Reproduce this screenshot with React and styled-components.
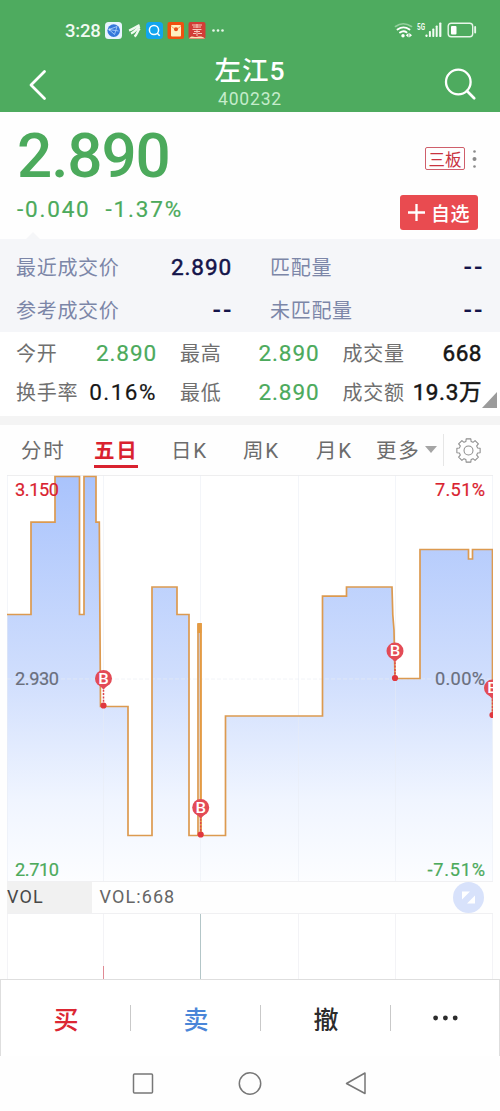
import React from "react";
import styled, { createGlobalStyle } from "styled-components";

const GREEN = "#4caa5c";
const RED = "#d9222f";

const Global = createGlobalStyle`
  * { box-sizing: border-box; }
  body {
    margin: 0;
    background: #fff;
    font-family: Roboto, "Noto Sans CJK SC", sans-serif;
  }
  svg { display: block; flex: none; }
`;

const Screen = styled.div`
  width: 500px;
  height: 1111px;
  background: #fefefe;
  display: flex;
  flex-direction: column;
  overflow: hidden;
`;

const Header = styled.header`
  height: 112px;
  flex: none;
  background: #4eab5f;
  color: #fff;
`;

const StatusBar = styled.div`
  height: 46px;
  padding: 16px 22px 0 65px;
  display: flex;
  align-items: center;
`;

const Clock = styled.span`
  font-size: 18.5px;
  font-weight: 500;
  line-height: 28px;
  letter-spacing: -0.2px;
  width: 40px;
  color: #f1faf2;
`;

const StatusIcons = styled.div`
  display: flex;
  align-items: center;
  margin-left: ${(p) => (p.$end ? "auto" : "0")};
`;

const TitleBar = styled.div`
  height: 66px;
  display: grid;
  grid-template-columns: 100px 1fr 100px;
`;

const BackButton = styled.div`
  padding: 23px 0 0 28px;
`;

const SearchButton = styled.div`
  padding: 22px 0 0 44px;
`;

const TitleStack = styled.div`
  display: flex;
  flex-direction: column;
  align-items: center;
`;

const Title = styled.div`
  margin-top: 7px;
  font-size: 26.5px;
  font-weight: 500;
  line-height: 36px;
  letter-spacing: 1px;
`;

const Code = styled.div`
  font-size: 17.5px;
  line-height: 20px;
  margin-top: 0;
  letter-spacing: 0.8px;
  color: #c5eccb;
`;

const Quote = styled.section`
  height: 127px;
  flex: none;
  display: flex;
  justify-content: space-between;
  padding: 0 22px 0 17px;
  position: relative;
`;

const Notch = styled.i`
  position: absolute;
  left: 26px;
  bottom: 0;
  border: 7px solid transparent;
  border-top: 0;
  border-bottom-color: #f5f6f8;
`;

const Price = styled.div`
  margin-top: 7px;
  font-size: 62px;
  font-weight: 500;
  line-height: 74px;
  color: ${GREEN};
  letter-spacing: -1.1px;
`;

const Changes = styled.div`
  display: flex;
  gap: 15px;
  margin-top: 3px;
  font-size: 22.5px;
  line-height: 26px;
  letter-spacing: 1.8px;
  color: ${GREEN};
  -webkit-text-stroke: 0.2px ${GREEN};
`;

const QuoteSide = styled.div`
  display: flex;
  flex-direction: column;
  align-items: flex-end;
`;

const BoardRow = styled.div`
  display: flex;
  align-items: center;
  gap: 7px;
  margin-top: 35px;
`;

const BoardTag = styled.span`
  width: 40px;
  height: 23px;
  border: 1px solid #cf5f6b;
  border-radius: 2px;
  color: #c9333f;
  font-size: 16.5px;
  line-height: 25px;
  text-align: center;
`;

const AddButton = styled.div`
  width: 78px;
  height: 35px;
  margin-top: 25px;
  border-radius: 3px;
  background: #e94b50;
  color: #fff;
  display: flex;
  align-items: center;
  gap: 6px;
  padding-left: 8px;
  font-size: 19px;
  font-weight: 500;
`;

const AddText = styled.span`
  line-height: 31px;
  padding-top: 3px;
  letter-spacing: 0.4px;
`;

const MatchPanel = styled.section`
  height: 93px;
  flex: none;
  background: #f5f6f9;
  padding: 6px 16px 0 16px;
  display: grid;
  grid-template-columns: 216px 213px;
  column-gap: 38px;
  grid-auto-rows: 43px;
`;

const StatPanel = styled.section`
  height: 84px;
  flex: none;
  background: #fff;
  padding: 1px 18px 0 16px;
  display: grid;
  grid-template-columns: 141px 139.5px 139.5px;
  column-gap: 23px;
  grid-auto-rows: 39px;
  position: relative;
`;

const Corner = styled.i`
  position: absolute;
  right: 3px;
  bottom: 8px;
  border-left: 15px solid transparent;
  border-bottom: 16px solid #9b9b9b;
`;

const Pair = styled.div`
  display: flex;
  justify-content: space-between;
  align-items: center;
  white-space: nowrap;
`;

const Label = styled.span`
  font-size: 20px;
  line-height: 30px;
  padding-top: 3px;
  letter-spacing: 0.7px;
  color: ${(p) => (p.$blue ? "#7c86a8" : "#6f6f6f")};
`;

const Value = styled.span`
  font-size: 22.5px;
  line-height: 30px;
  letter-spacing: ${(p) => p.$spacing ?? 0.9}px;
  font-weight: 400;
  color: ${(p) => p.$color};
  -webkit-text-stroke: ${(p) => (p.$bold ? 0.5 : 0.2)}px ${(p) => p.$color};
`;

const Dashes = styled.span`
  font-size: 25px;
  font-weight: 500;
  line-height: 26px;
  padding-top: 2px;
  letter-spacing: 2px;
  margin-right: -1.5px;
  color: #14144a;
`;

const Band = styled.div`
  height: 9px;
  flex: none;
  background: #f4f4f4;
`;

const Tabs = styled.nav`
  height: 50px;
  flex: none;
  display: grid;
  grid-template-columns: 73px 77px 72px 73px 60px 67px 1fr;
  padding-left: 21px;
`;

const Tab = styled.div`
  display: flex;
  height: 50px;
  font-size: 20.5px;
  letter-spacing: 1.8px;
  color: ${(p) => (p.$active ? RED : "#6c6c6c")};
  font-weight: ${(p) => (p.$active ? 700 : 400)};
  white-space: nowrap;
`;

const TabText = styled.span`
  height: 43px;
  line-height: 52px;
  width: ${(p) => (p.$active ? "44px" : "auto")};
  border-bottom: 3px solid ${(p) => (p.$active ? RED : "transparent")};
`;

const MoreArrow = styled.i`
  height: 0;
  border: 6px solid transparent;
  border-bottom: 0;
  border-top: 7px solid #a5a5a5;
  margin: 21px 0 0 4px;
`;

const SettingsCell = styled.div`
  height: 32px;
  margin: 9px 0 0 0;
  padding: 4px 0 0 12px;
  border-left: 1px solid #e6e6e6;
`;

const ChartArea = styled.div`
  height: 406px;
  flex: none;
`;

const VolumeHead = styled.div`
  height: 33px;
  flex: none;
  display: flex;
  margin-left: 7px;
  width: 486px;
  border-top: 1px solid #f0f0f2;
  border-bottom: 1px solid #f0f0f2;
  font-size: 18px;
  line-height: 30px;
  letter-spacing: 1.1px;
  color: #666;
`;

const VolumeName = styled.div`
  width: 85px;
  background: #f1f1f1;
  color: #484848;
`;

const VolumeValue = styled.div`
  padding-left: 7.5px;
  flex: 1;
`;

const Expand = styled.div`
  margin-right: 9px;
  height: 31px;
`;

const ActionBar = styled.div`
  height: 77px;
  flex: none;
  border: 1px solid #dedede;
  border-bottom: 0;
  background: #fff;
  display: grid;
  grid-template-columns: 130px 130px 130px 1fr;
`;

const Action = styled.div`
  display: flex;
  align-items: center;
  justify-content: center;
  height: 75px;
  font-size: 25px;
  font-weight: 500;
  color: ${(p) => p.$color};
  background: linear-gradient(#c9c9c9, #c9c9c9) no-repeat 129px 25px /
    ${(p) => (p.$last ? "0 0" : "1px 26px")};
`;

const NavBar = styled.div`
  flex: 1;
  display: flex;
  justify-content: center;
  padding-top: 14px;
  gap: 81px;
`;

const AppIcons = () => (
  <svg width="126" height="18" viewBox="0 0 126 18">
    <rect x="0" y="0" width="17" height="17" rx="3.5" fill="#e8f4fd" />
    <circle cx="8.7" cy="8.6" r="6.3" fill="#3478db" />
    <path d="M4 7.5 12 4.5 9.5 12.5ZM4 7.5 13.5 9" fill="none" stroke="#a9cdf8" strokeWidth="0.9" />
    <circle cx="4.5" cy="7.6" r="1.1" fill="#cfe4fb" />
    <g fill="none" stroke="#effaf0" strokeWidth="2.3">
      <path d="M24 8.5C28 7.5 31 4.5 34.5 3.2" />
      <path d="M26 11.5C30 10 31.5 6.5 34.8 4.5" />
      <path d="M29.5 14.5C32.5 12.5 32 9 34.8 6.5" />
    </g>
    <rect x="41" y="0" width="17" height="17" rx="3.5" fill="#12a5ee" />
    <circle cx="49" cy="8" r="4.6" fill="none" stroke="#fff" strokeWidth="1.5" />
    <path d="m52.3 11.3 2.4 2.4" stroke="#fff" strokeWidth="1.6" />
    <rect x="62.5" y="0" width="16.5" height="17" rx="2" fill="#ef5010" />
    <rect x="66" y="3" width="10" height="11.5" rx="1" fill="#fff1c2" />
    <path d="M66.5 4.5Q71 9 75.5 4.5" fill="none" stroke="#f39a55" strokeWidth="1" />
    <circle cx="71" cy="7.3" r="2" fill="#e8501a" />
    <rect x="83.5" y="0" width="17" height="17" rx="2" fill="#d23c36" />
    <path d="M87 3h10M88 5h8M92 2v4M87.5 7.5h9M89 9.5h6M88 11.5h3M93 11.5h4M92 8v6" stroke="#f7c9bd" strokeWidth="1" />
    <path d="M84 16.5c2-3 4-2 6-1.5s6-2 10 1.5Z" fill="#fae3b7" />
    <g fill="#e9f7eb">
      <circle cx="108.5" cy="8.5" r="1.3" />
      <circle cx="113" cy="8.5" r="1.3" />
      <circle cx="117.5" cy="8.5" r="1.3" />
    </g>
  </svg>
);

const FiveG = styled.text`
  font: 700 9px Roboto, sans-serif;
  fill: #f3fbf4;
`;

const SignalIcons = () => (
  <svg width="84" height="18" viewBox="0 0 84 18">
    <g fill="none" strokeLinecap="round">
      <path d="M1.5 4.5Q9 -1 17.5 4.5" stroke="#94cf9d" strokeWidth="1.6" />
      <path d="M3.5 7.5Q9.5 3.2 15.5 7.5" stroke="#fff" strokeWidth="1.9" />
      <path d="M6 10.5Q9.5 8 12.5 10.3" stroke="#fff" strokeWidth="1.9" />
    </g>
    <circle cx="9" cy="13.7" r="1.7" fill="#fff" />
    <path d="M11.8 13.3 14.5 11v4.5ZM18 13.3 15.3 11v4.5Z" fill="#fff" />
    <FiveG x="23" y="8" textLength="8" lengthAdjust="spacingAndGlyphs">5G</FiveG>
    <g fill="#f3fbf4">
      <rect x="31.5" y="12.5" width="2" height="2.5" rx="0.7" />
      <rect x="34.9" y="9" width="2" height="6" rx="0.7" />
      <rect x="38.3" y="6.5" width="2" height="8.5" rx="0.7" />
      <rect x="41.7" y="3.5" width="2" height="11.5" rx="0.7" />
      <rect x="45.2" y="0.5" width="2.2" height="14.5" rx="0.7" />
    </g>
    <rect x="54.2" y="1.2" width="24.5" height="13.6" rx="3" fill="none" stroke="#e7f6e9" strokeWidth="1.4" />
    <rect x="57" y="4" width="5.5" height="8.5" rx="1" fill="#fff" />
    <rect x="80.2" y="4" width="1.9" height="7.5" rx="0.9" fill="#e7f6e9" />
  </svg>
);

const ChartLabel = styled.text`
  font: 400 18.2px Roboto, sans-serif;
  fill: ${(p) => p.$color};
  stroke: ${(p) => p.$color};
  stroke-width: 0.2px;
`;

const MarkerLetter = styled.text`
  font: 500 14px Roboto, sans-serif;
  fill: #fff;
  text-anchor: middle;
`;

const BuyMarker = ({ x, y }) => (
  <g>
    <path d={`M${x} ${y + 8}V${y + 26}`} stroke="#e0464c" strokeWidth="1.5" strokeDasharray="2 1.3" />
    <path d={`M${x - 5} ${y + 6}H${x + 5}L${x} ${y + 11}Z`} fill="#e34b56" />
    <circle cx={x} cy={y} r="8.5" fill="#e34b56" />
    <MarkerLetter x={x} y={y + 5} textLength="10.5" lengthAdjust="spacingAndGlyphs">B</MarkerLetter>
    <circle cx={x} cy={y + 27} r="3.1" fill="#e0383f" />
  </g>
);

const GRID_X = [7.5, 103.5, 200.5, 298.5, 395.5, 492.5];

const LINE =
  "M7 139.5H31V47.2H55V1.5H79.5V139.5H84V1.5H96V47.2H99.3L100.5 231.5H128V360.5H152V112H177V139.5H189V360.5H198V149H200.8V360.5H225.5V241H322.5V121.2H346.5V112H392L392.8 140L394 155L395 203.5H420V74.5H468.5V84H472.5V74.5H492.5V239";

const PriceChart = () => (
  <svg width="500" height="406" viewBox="0 0 500 406">
    <defs>
      <linearGradient id="area" gradientUnits="userSpaceOnUse" x1="0" y1="0" x2="0" y2="406">
        <stop offset="0" stopColor="#a9c3fc" />
        <stop offset="0.5" stopColor="#d0defd" />
        <stop offset="0.8" stopColor="#f0f5ff" />
        <stop offset="1" stopColor="#fcfdff" />
      </linearGradient>
      <clipPath id="plot">
        <rect x="7" y="0" width="486" height="406" />
      </clipPath>
    </defs>
    <rect x="7" y="0" width="486" height="406" fill="#fff" />
    <path d="M7 0.5H493" stroke="#eeeeef" />
    <path d={`${LINE}V406H7Z`} fill="url(#area)" />
    <path d={GRID_X.map((x) => `M${x} 0V406`).join("")} stroke="#e8ebf3" strokeOpacity="0.5" />
    <path d="M7 204H493" stroke="#e9edf4" strokeOpacity="0.6" strokeDasharray="4 2" />
    <g clipPath="url(#plot)">
      <path d={LINE} fill="none" stroke="#dc9a50" strokeWidth="1.7" />
      <path d="M198.200 149H200.700V360" fill="none" stroke="#e49b42" strokeWidth="2" />
      <path d="M199.500 148.500V158" stroke="#e49b42" strokeWidth="4" />
      <BuyMarker x={103.5} y={203.5} />
      <BuyMarker x={200.7} y={332.5} />
      <BuyMarker x={395} y={176} />
      <BuyMarker x={492.5} y={213} />
    </g>
    <ChartLabel x="15" y="21" textLength="44" $color={RED}>3.150</ChartLabel>
    <ChartLabel x="15" y="210" textLength="44" $color="#6a6f7d">2.930</ChartLabel>
    <ChartLabel x="15" y="400.5" textLength="44" $color={GREEN}>2.710</ChartLabel>
    <ChartLabel x="435" y="21" textLength="50" $color={RED}>7.51%</ChartLabel>
    <ChartLabel x="435" y="210" textLength="50" $color="#6a6f7d">0.00%</ChartLabel>
    <ChartLabel x="427.5" y="400.5" textLength="57.5" $color={GREEN}>-7.51%</ChartLabel>
  </svg>
);

const VolumeChart = () => (
  <svg width="500" height="65" viewBox="0 0 500 65">
    <rect x="7" width="486" height="65" fill="#fff" />
    <path d={GRID_X.map((x) => `M${x} 0V65`).join("")} stroke="#f3f3f6" />
    <rect x="103" y="52" width="1" height="13" fill="#e08a94" />
    <rect x="200" y="0" width="1" height="65" fill="#b3c6c8" />
  </svg>
);

const gearPath = (() => {
  const pts = [];
  for (let i = 0; i < 8; i++) {
    const a = (i * Math.PI) / 4 - Math.PI / 2;
    [[-0.28, 9], [-0.2, 11.4], [0.2, 11.4], [0.28, 9]].forEach(([d, r]) => {
      pts.push(`${(12 + r * Math.cos(a + d)).toFixed(2)} ${(12 + r * Math.sin(a + d)).toFixed(2)}`);
    });
  }
  return `M${pts.join("L")}Z`;
})();

const TABS = ["分时", "五日", "日K", "周K", "月K", "更多"];

export default function App() {
  return (
    <>
      <Global />
      <Screen>
        <Header>
          <StatusBar>
            <Clock>3:28</Clock>
            <StatusIcons><AppIcons /></StatusIcons>
            <StatusIcons $end><SignalIcons /></StatusIcons>
          </StatusBar>
          <TitleBar>
            <BackButton>
              <svg width="20" height="32" viewBox="0 0 20 32">
                <path d="M16.5 2.5 3 16l13.5 13.5" fill="none" stroke="#fff" strokeWidth="2.8" strokeLinecap="round" strokeLinejoin="round" />
              </svg>
            </BackButton>
            <TitleStack>
              <Title>左江5</Title>
              <Code>400232</Code>
            </TitleStack>
            <SearchButton>
              <svg width="34" height="34" viewBox="0 0 34 34">
                <circle cx="14.3" cy="14" r="12.3" fill="none" stroke="#fff" strokeWidth="2.3" />
                <path d="m23 23 7.2 7.2" stroke="#fff" strokeWidth="2.7" strokeLinecap="round" />
              </svg>
            </SearchButton>
          </TitleBar>
        </Header>

        <Quote>
          <div>
            <Price>2.890</Price>
            <Changes><span>-0.040</span><span>-1.37%</span></Changes>
          </div>
          <QuoteSide>
            <BoardRow>
              <BoardTag>三板</BoardTag>
              <svg width="6" height="20" viewBox="0 0 6 20" fill="#8a8a8a">
                <circle cx="2.5" cy="2.5" r="1.3" />
                <circle cx="2.5" cy="10" r="2" />
                <circle cx="2.5" cy="17.5" r="1.3" />
              </svg>
            </BoardRow>
            <AddButton>
              <svg width="17" height="17" viewBox="0 0 17 17">
                <path d="M8.5 0v17M0 8.5h17" stroke="#fff" strokeWidth="2.3" />
              </svg>
              <AddText>自选</AddText>
            </AddButton>
          </QuoteSide>
          <Notch />
        </Quote>

        <MatchPanel>
          <Pair><Label $blue>最近成交价</Label><Value $bold $color="#14144a">2.890</Value></Pair>
          <Pair><Label $blue>匹配量</Label><Dashes>--</Dashes></Pair>
          <Pair><Label $blue>参考成交价</Label><Dashes>--</Dashes></Pair>
          <Pair><Label $blue>未匹配量</Label><Dashes>--</Dashes></Pair>
        </MatchPanel>

        <StatPanel>
          <Pair><Label>今开</Label><Value $color={GREEN}>2.890</Value></Pair>
          <Pair><Label>最高</Label><Value $color={GREEN}>2.890</Value></Pair>
          <Pair><Label>成交量</Label><Value $bold $color="#161616" $spacing={0.5}>668</Value></Pair>
          <Pair><Label>换手率</Label><Value $color="#161616" $spacing={1.5}>0.16%</Value></Pair>
          <Pair><Label>最低</Label><Value $color={GREEN}>2.890</Value></Pair>
          <Pair><Label>成交额</Label><Value $bold $color="#161616" $spacing={0.6}>19.3万</Value></Pair>
          <Corner />
        </StatPanel>
        <Band />

        <Tabs>
          {TABS.map((t) => (
            <Tab key={t} $active={t === "五日"}>
              <TabText $active={t === "五日"}>{t}</TabText>
              {t === "更多" && <MoreArrow />}
            </Tab>
          ))}
          <SettingsCell>
            <svg width="25" height="25" viewBox="0 0 24 24" fill="none" stroke="#8c8c8c" strokeWidth="1" strokeLinejoin="round">
              <path d={gearPath} />
              <circle cx="12" cy="12" r="4.3" />
            </svg>
          </SettingsCell>
        </Tabs>

        <ChartArea><PriceChart /></ChartArea>
        <VolumeHead>
          <VolumeName>VOL</VolumeName>
          <VolumeValue>VOL:668</VolumeValue>
          <Expand>
            <svg width="31" height="31" viewBox="0 0 31 31">
              <circle cx="15.5" cy="15.5" r="15.5" fill="#d8e2fb" />
              <path d="M9 9.5h8l-8 8ZM22 21.5h-8l8-8Z" fill="#fff" />
            </svg>
          </Expand>
        </VolumeHead>
        <VolumeChart />

        <ActionBar>
          <Action $color="#dc2733">买</Action>
          <Action $color="#4a86d8">卖</Action>
          <Action $color="#2c2c2c">撤</Action>
          <Action $color="#2c2c2c" $last>
            <svg width="26" height="6" viewBox="0 0 26 6" fill="#2c2c2c">
              <circle cx="3.6" cy="3" r="2.4" />
              <circle cx="13.4" cy="3" r="2.4" />
              <circle cx="23.2" cy="3" r="2.4" />
            </svg>
          </Action>
        </ActionBar>

        <NavBar>
          <svg width="26" height="26" viewBox="0 0 26 26" fill="none" stroke="#777" strokeWidth="1.5">
            <rect x="3.5" y="4" width="19" height="19" rx="1" />
          </svg>
          <svg width="26" height="26" viewBox="0 0 26 26" fill="none" stroke="#777" strokeWidth="1.5">
            <circle cx="13" cy="13.5" r="10.7" />
          </svg>
          <svg width="26" height="26" viewBox="0 0 26 26" fill="none" stroke="#777" strokeWidth="1.5" strokeLinejoin="round">
            <path d="M21 3V23.5L2.5 13.5Z" />
          </svg>
        </NavBar>
      </Screen>
    </>
  );
}
